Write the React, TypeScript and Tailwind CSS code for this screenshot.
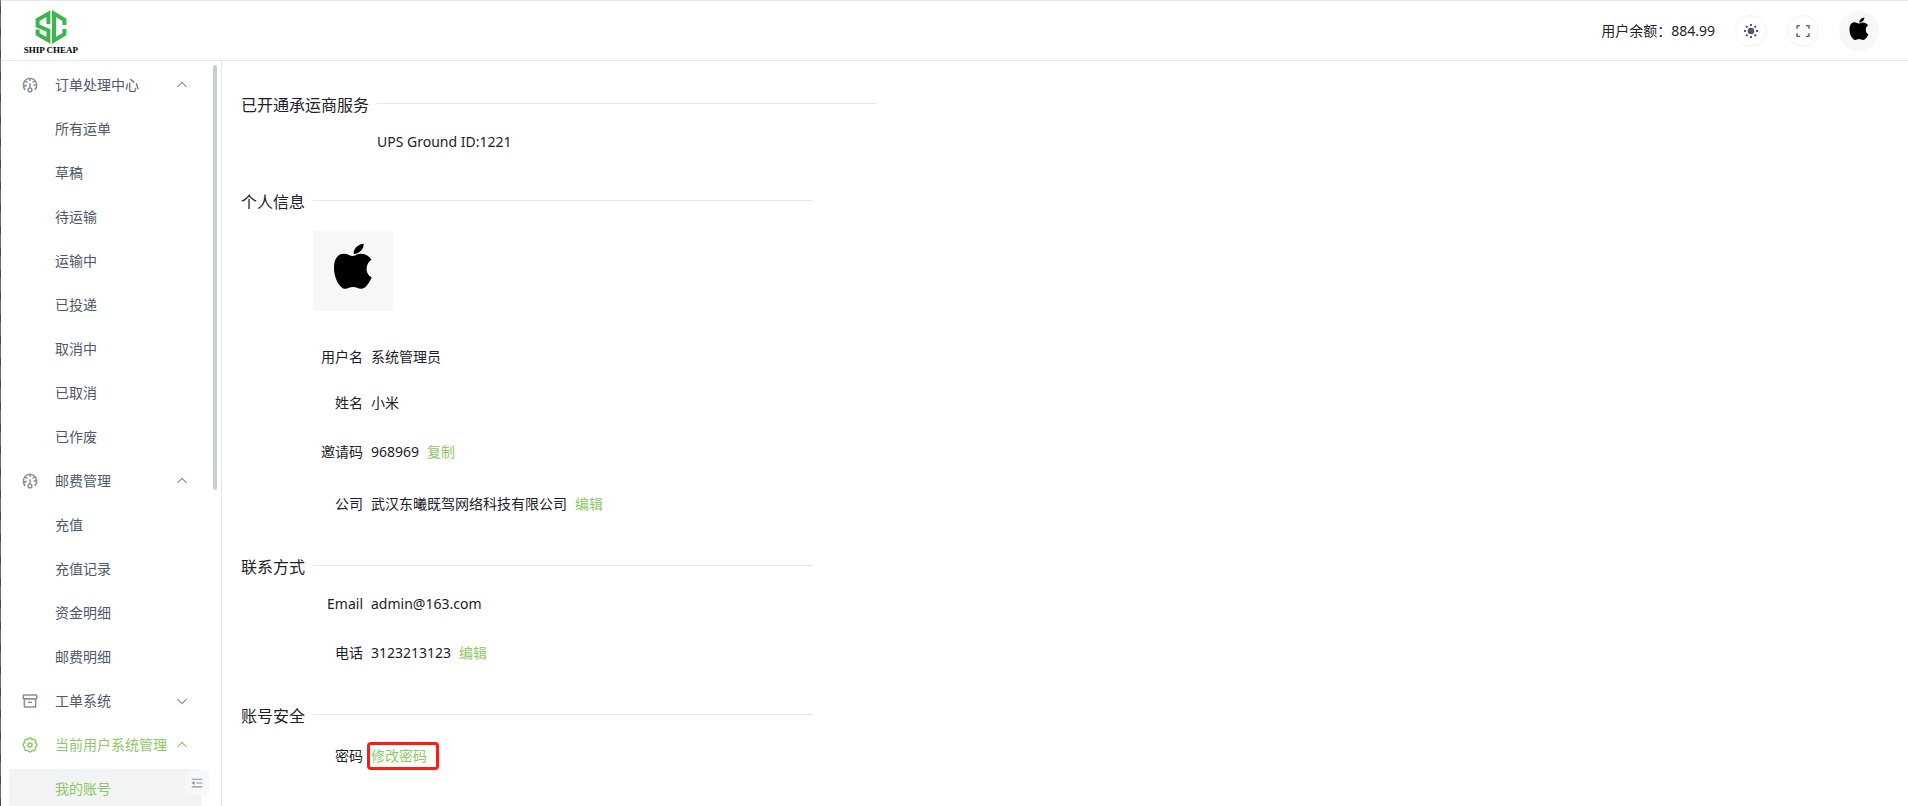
import React, { useState } from "react";
import clsx from "clsx";

type MenuGroup = {
  key: string;
  title: string;
  icon: React.ReactNode;
  items: string[];
};

const strokeProps = {
  viewBox: "0 0 48 48",
  fill: "none",
  stroke: "currentColor",
  strokeWidth: 4,
  "aria-hidden": true,
};

const IconDashboard = () => (
  <svg {...strokeProps} className="w-[18px] h-[18px]">
    <path d="M41.808 24c.118 4.63-1.486 9.333-5.21 13m5.21-13h-8.309m8.309 0c-.112-4.38-1.767-8.694-4.627-12M24 6c5.531 0 10.07 2.404 13.18 6M24 6c-5.724 0-10.384 2.574-13.5 6.38M24 6v7.5M37.18 12 31 17.5m-20.5-5.12L17 17.5m-6.5-5.12C6.99 16.662 5.44 22.508 6.53 28m4.872 9c-2.65-2.609-4.226-5.742-4.873-9m0 0 8.97-3.5" />
    <path d="M24 32a5 5 0 1 0 0 10 5 5 0 0 0 0-10Zm0 0V19" />
  </svg>
);

const IconArchive = () => (
  <svg {...strokeProps} className="w-[18px] h-[18px]">
    <rect x="9" y="18" width="30" height="22" rx="1" />
    <path d="M6 9a1 1 0 0 1 1-1h34a1 1 0 0 1 1 1v8a1 1 0 0 1-1 1H7a1 1 0 0 1-1-1V9ZM19 27h10" />
  </svg>
);

const IconSettings = () => (
  <svg {...strokeProps} className="w-[18px] h-[18px]">
    <path d="M38.3 18.1a6.200 6.200 0 0 1 0 11.800 6.200 6.200 0 0 1-8.400 8.400 6.200 6.200 0 0 1-11.800 0 6.200 6.200 0 0 1-8.400-8.400 6.200 6.200 0 0 1 0-11.800 6.200 6.200 0 0 1 8.400-8.400 6.200 6.200 0 0 1 11.800 0 6.200 6.200 0 0 1 8.400 8.400Z" />
    <circle cx="24" cy="24" r="5.5" />
  </svg>
);

const IconArrow = ({ open }: { open: boolean }) => (
  <svg {...strokeProps} className="w-3.5 h-3.5">
    <path d={open ? "M39.6 30.557 24.043 15 8.487 30.557" : "M39.6 17.443 24.043 33 8.487 17.443"} />
  </svg>
);

const IconMenuFold = () => (
  <svg {...strokeProps} className="w-3.5 h-3.5">
    <path d="M42 11H6M42 24H22M42 37H6" />
    <path fill="currentColor" d="M13.66 26.912l-4.82-3.118 4.82-3.118v6.236Z" />
  </svg>
);

const IconFullscreen = () => (
  <svg {...strokeProps} className="w-4 h-4">
    <path d="M42 17V9a1 1 0 0 0-1-1h-8M6 17V9a1 1 0 0 1 1-1h8m27 23v8a1 1 0 0 1-1 1h-8M6 31v8a1 1 0 0 0 1 1h8" />
  </svg>
);

const IconSun = () => (
  <svg viewBox="0 0 48 48" fill="currentColor" className="w-4 h-4" aria-hidden>
    <circle cx="24" cy="24" r="10" />
    {[0, 45, 90, 135, 180, 225, 270, 315].map((deg) => (
      <rect key={deg} x="21" y="3" width="6" height="6" rx="1" transform={`rotate(${deg} 24 24)`} />
    ))}
  </svg>
);

const AppleMark = ({ className }: { className: string }) => (
  <svg viewBox="0 0 80 80" fill="#000" className={className} aria-hidden>
    <path d="M50.600 12.800c.5 5.200-4.700 10.500-9.900 10.100-.6-5 4.700-9.900 9.900-10.100Z" />
    <path d="M58.500 28.700c-2.700-4-6.600-5.900-10.700-5.900-3.600 0-5.800 2.100-8.300 2.100-2.600 0-5-2.200-8.900-2.200-5 0-9.600 4.200-9.600 14.200 0 10.600 6.200 20.900 11.200 20.900 2.800 0 4.800-1.700 8-1.700s4.600 1.700 7.900 1.700c4.600 0 8.800-6.600 10.600-11.500-3.300-1.400-5.100-4.600-5.100-8.400 0-4.200 2-7.400 4.900-9.200Z" />
  </svg>
);

const Logo = () => (
  <a href="#" className="flex flex-col items-center w-[56px] pt-1">
    <svg viewBox="0 0 32 34" fill="none" stroke="#3cb54a" strokeWidth="4" className="w-8 h-[34px]" aria-hidden>
      <path d="M13.400 14V3.600L2.600 9.800v6L13.400 20.500v9.900L2.600 24.200V19.500" />
      <path d="M29.400 15V9.800L19 3.600v26.800l10.400-6.200V19" />
    </svg>
    <span className="font-['Liberation_Serif',serif] text-[9px] leading-3 font-bold text-black whitespace-nowrap">SHIP CHEAP</span>
  </a>
);

const MENU: MenuGroup[] = [
  {
    key: "orders",
    title: "订单处理中心",
    icon: <IconDashboard />,
    items: ["所有运单", "草稿", "待运输", "运输中", "已投递", "取消中", "已取消", "已作废"],
  },
  {
    key: "postage",
    title: "邮费管理",
    icon: <IconDashboard />,
    items: ["充值", "充值记录", "资金明细", "邮费明细"],
  },
  { key: "tickets", title: "工单系统", icon: <IconArchive />, items: [] },
  { key: "account", title: "当前用户系统管理", icon: <IconSettings />, items: ["我的账号"] },
];

const ACTIVE_ITEM = "我的账号";

function Sidebar() {
  const [opened, setOpened] = useState<string[]>(["orders", "postage", "account"]);

  const toggle = (key: string) => {
    setOpened((prev) => (prev.includes(key) ? prev.filter((k) => k !== key) : [...prev, key]));
  };

  return (
    <aside className="relative w-[221px] shrink-0 border-r border-[#e5e6eb] overflow-hidden">
      <nav className="flex flex-col gap-1 pt-1 pl-2 pr-5">
        {MENU.map((group) => {
          const open = opened.includes(group.key);
          const active = group.items.includes(ACTIVE_ITEM);
          return (
            <React.Fragment key={group.key}>
              <button
                onClick={() => toggle(group.key)}
                aria-expanded={open}
                className={clsx(
                  "h-10 shrink-0 flex items-center pl-3 pr-3 text-left",
                  active ? "text-[#8dc965]" : "text-[#4e5969]"
                )}
              >
                <span className={clsx("w-[34px]", !active && "text-[#86909c]")}>{group.icon}</span>
                <span className="flex-1 whitespace-nowrap">{group.title}</span>
                <span className={clsx(!active && "text-[#86909c]")}>
                  <IconArrow open={open} />
                </span>
              </button>
              {open &&
                group.items.map((item) => (
                  <a
                    key={item}
                    href="#"
                    className={clsx(
                      "h-10 shrink-0 flex items-center pl-[46px] rounded-xs",
                      item === ACTIVE_ITEM ? "bg-[#f2f3f5] text-[#8dc965]" : "text-[#4e5969]"
                    )}
                  >
                    {item}
                  </a>
                ))}
            </React.Fragment>
          );
        })}
      </nav>
      <div className="absolute top-1 right-1 w-1 h-[425px] rounded-full bg-[#c9cdd4]" />
      <button
        aria-label="收起菜单"
        className="absolute right-3 bottom-[11px] w-6 h-6 flex items-center justify-center rounded-xs bg-[#f7f8fa] text-[#86909c]"
      >
        <IconMenuFold />
      </button>
    </aside>
  );
}

function Section({ title, children }: { title: string; children: React.ReactNode }) {
  return (
    <section className="flex items-start gap-2">
      <h2 className="text-base leading-6 whitespace-nowrap">{title}</h2>
      <div className="w-[500px] mt-2.5 pt-[15px] border-t border-[#e5e6eb]">{children}</div>
    </section>
  );
}

function Row({ label, value, action }: { label: string; value?: string; action?: React.ReactNode }) {
  return (
    <div className={clsx("flex items-center gap-2", action ? "h-[52px]" : "h-[46px]")}>
      <span className="w-[50px] text-right">{label}</span>
      {value && <span>{value}</span>}
      {action}
    </div>
  );
}

const LinkButton = ({ children }: { children: React.ReactNode }) => (
  <button className="text-[#8dc965]">{children}</button>
);

export default function App() {
  return (
    <div className="h-screen flex overflow-hidden bg-white text-[#1d2129] text-sm font-['Noto_Sans','Noto_Sans_CJK_SC',sans-serif]">
      <div className="w-px shrink-0 bg-[repeating-linear-gradient(#6e6e70_0_6px,#54454b_6px_14px,#6e6e70_14px_22px)]" />
      <div className="flex-1 min-w-0 flex flex-col">
        <header className="h-[61px] shrink-0 flex items-center justify-between pl-[22px] pr-[29px] border-y border-[#e5e6eb]">
          <Logo />
          <div className="flex items-center gap-5">
            <span>用户余额：884.99</span>
            <button aria-label="切换主题" className="w-8 h-8 flex items-center justify-center rounded-full border border-[#f2f3f5] text-[#4e5969]">
              <IconSun />
            </button>
            <button aria-label="全屏" className="w-8 h-8 flex items-center justify-center rounded-full border border-[#f2f3f5] text-[#4e5969]">
              <IconFullscreen />
            </button>
            <button aria-label="账号" className="w-10 h-10 rounded-full bg-[#f6f8f8]">
              <AppleMark className="w-10 h-10" />
            </button>
          </div>
        </header>

        <div className="flex-1 min-h-0 flex">
          <Sidebar />
          <main className="flex-1 min-w-0 overflow-hidden flex flex-col gap-[25px] pl-[19px] pt-8">
            <Section title="已开通承运商服务">
              <p className="h-[46px] flex items-center">UPS Ground ID:1221</p>
            </Section>

            <Section title="个人信息">
              <div className="w-20 h-20 mt-[15px] mb-[23px] rounded-xs bg-[#f6f8f8]">
                <AppleMark className="w-20 h-20" />
              </div>
              <Row label="用户名" value="系统管理员" />
              <Row label="姓名" value="小米" />
              <Row label="邀请码" value="968969" action={<LinkButton>复制</LinkButton>} />
              <Row label="公司" value="武汉东曦既驾网络科技有限公司" action={<LinkButton>编辑</LinkButton>} />
            </Section>

            <Section title="联系方式">
              <Row label="Email" value="admin@163.com" />
              <Row label="电话" value="3123213123" action={<LinkButton>编辑</LinkButton>} />
            </Section>

            <Section title="账号安全">
              <Row
                label="密码"
                action={
                  <span className="-ml-1 w-[72px] h-7 pl-px flex items-center border-3 border-[#fb1c13] rounded-sm">
                    <LinkButton>修改密码</LinkButton>
                  </span>
                }
              />
            </Section>
          </main>
        </div>
      </div>
    </div>
  );
}
